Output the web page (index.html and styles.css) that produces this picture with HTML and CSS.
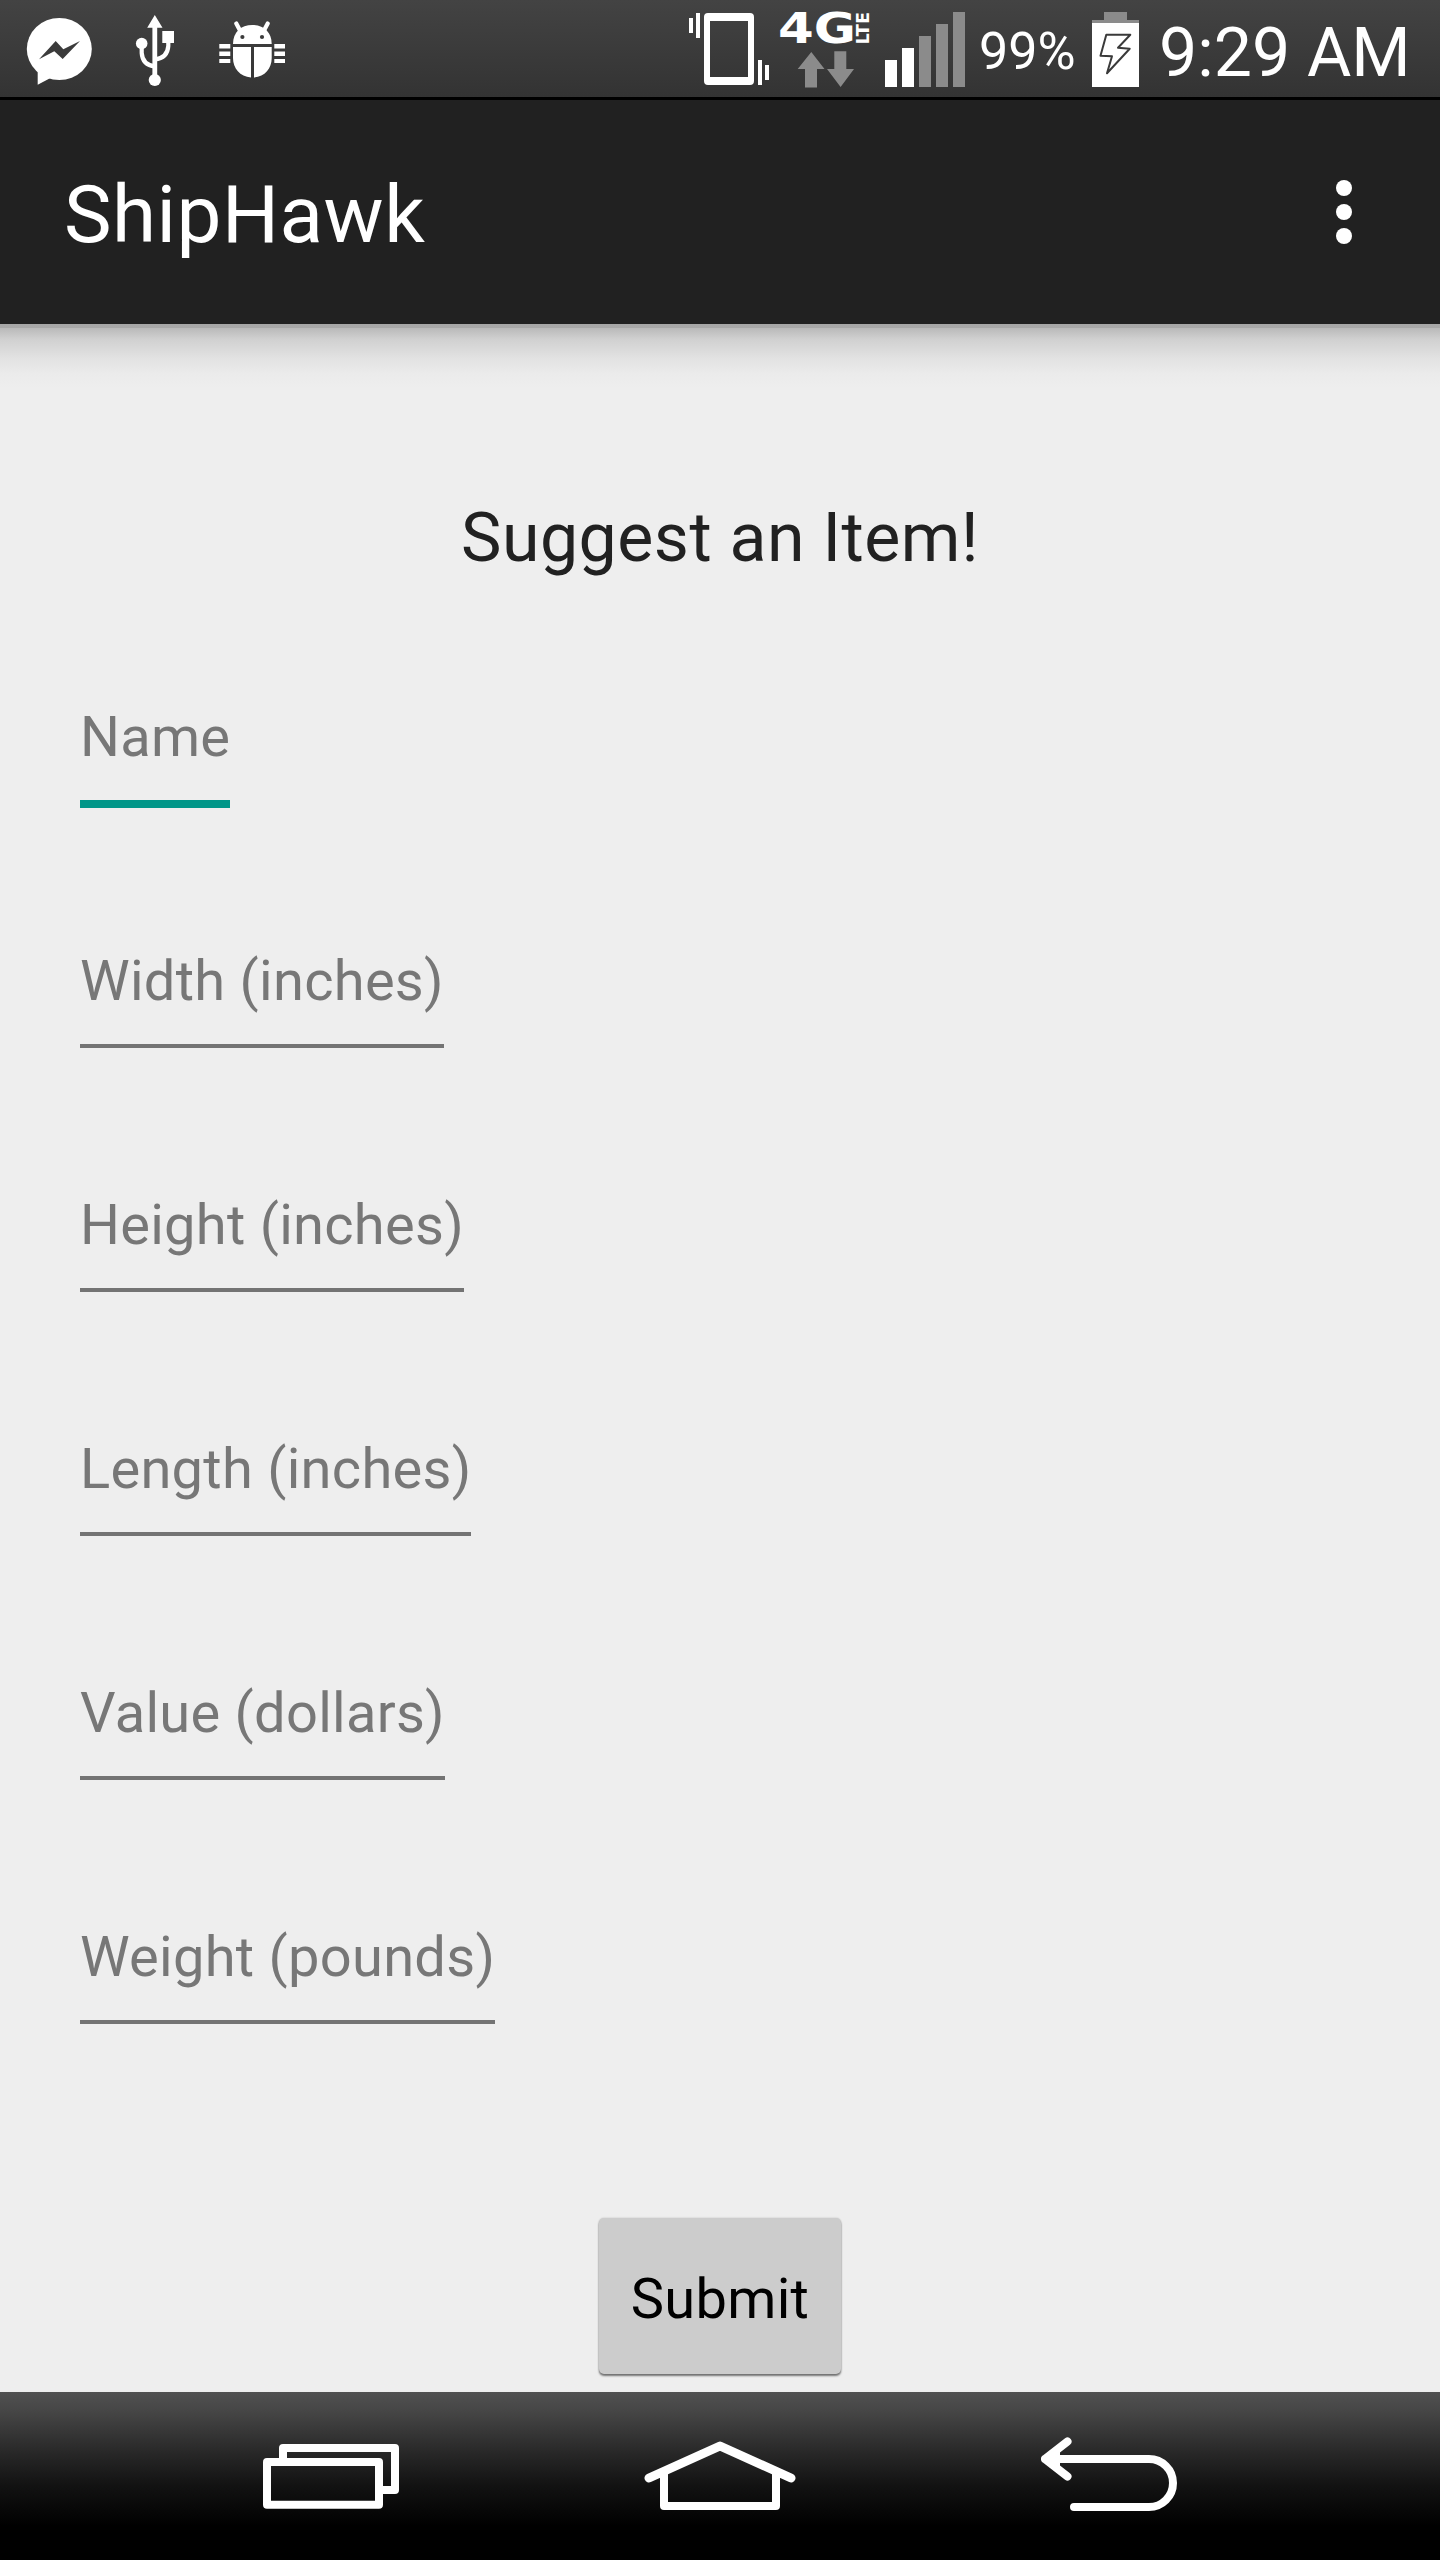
FILE: index.html
```html
<!DOCTYPE html>
<html lang="en">
<head>
<meta charset="utf-8">
<title>ShipHawk</title>
<link rel="stylesheet" href="styles.css">
</head>
<body>
<div class="screen">
  <div class="status-bar">
    <div class="status-group notifications">
      <svg class="icon" width="68" height="97" viewBox="26 0 68 97">
        <ellipse cx="59.3" cy="49" rx="32.5" ry="31"/>
        <path d="M37.7 69V84.7L50 78.2z"/>
        <path class="cut" d="M39 59.3L55.7 41L63.3 49.3L80 41L62.7 59L54.3 51.3z"/>
      </svg>
      <svg class="icon" width="42" height="97" viewBox="135 0 42 97">
        <path d="M154.8 15L162.5 27.7H147.2zM162.3 31H174V43H162.3z"/>
        <circle cx="154.8" cy="80" r="6.1"/>
        <circle cx="141.7" cy="43.5" r="5.8"/>
        <path class="line" stroke-width="4.8" d="M154.8 26V80"/>
        <path class="line" stroke-width="4.2" d="M141.7 46V53Q142.5 65 154.8 66.3M168.3 42V46Q167.5 58 154.8 59.5"/>
      </svg>
      <svg class="icon" width="69" height="97" viewBox="218 0 69 97">
        <path d="M233 44C233 32 241 25 252.3 25S271.7 32 271.7 44z"/>
        <path class="line round" stroke-width="4.2" d="M236.3 23.5L239.5 29.5M267.7 23.5L264.5 29.5"/>
        <circle class="cut" cx="242.4" cy="37" r="2.1"/>
        <circle class="cut" cx="262" cy="37" r="2.1"/>
        <path d="M233 47H251V77.6C240 76.5 233 68.5 233 58zM254 47H271.7V58C271.7 68.5 265 76.5 254 77.6z"/>
        <path d="M219.3 44H230.3V48.5H219.3zM219.3 51.6H230.3V56H219.3zM219.3 59H230.3V63H219.3zM274.3 44H285V48.5H274.3zM274.3 51.6H285V56H274.3zM274.3 59H285V63H274.3z"/>
      </svg>
    </div>
    <div class="status-group system">
      <svg class="icon" width="82" height="97" viewBox="688 0 82 97">
        <path fill-rule="evenodd" d="M708 13H750Q754 13 754 17V81Q754 85 750 85H708Q704 85 704 81V17Q704 13 708 13zM710 21V77H748V21z"/>
        <path d="M689 18H693V33H689zM696 13H700V38H696zM758 60H762V85H758zM765 65H769V80H765z"/>
      </svg>
      <svg class="icon network" width="98" height="97" viewBox="776 0 98 97">
        <text class="net-main" x="778" y="43.2" textLength="78" lengthAdjust="spacingAndGlyphs">4G</text>
        <text class="net-sub" transform="translate(869 44.5) rotate(-90)" textLength="32.5" lengthAdjust="spacingAndGlyphs">LTE</text>
        <path class="dim" d="M811.3 52L824.5 69H817V87.5H805V69H797.7zM834.3 51.3H846.3V69H854L840.6 87L827 69H834.3z"/>
      </svg>
      <svg class="icon signal" width="80" height="97" viewBox="885 0 80 97">
        <path d="M885 60H897V87H885zM902 48H914V87H902z"/>
        <path class="dim" d="M919 36H931V87H919zM936 24H948V87H936zM953 12H965V87H953z"/>
      </svg>
      <span class="battery-level">99%</span>
      <svg class="icon" width="47" height="97" viewBox="1092 0 47 97">
        <path class="dim" d="M1104 12H1127V20H1139V23H1092V20H1104z"/>
        <path d="M1092 23H1139V87H1092z"/>
        <path class="bolt" d="M1106.3 34.7H1130.3L1118 47.7L1129.7 48.7L1107 73.3L1112 56.3L1100.5 55.7z"/>
      </svg>
      <span class="clock">9:29 AM</span>
    </div>
  </div>

  <header class="app-bar">
    <h1 class="app-title">ShipHawk</h1>
    <div class="overflow-menu"><i></i><i></i><i></i></div>
  </header>

  <main class="content">
    <h2 class="form-title">Suggest an Item!</h2>
    <div class="form">
      <div class="row"><span class="field focused">Name</span></div>
      <div class="row"><span class="field">Width (inches)</span></div>
      <div class="row"><span class="field">Height (inches)</span></div>
      <div class="row"><span class="field">Length (inches)</span></div>
      <div class="row"><span class="field">Value (dollars)</span></div>
      <div class="row"><span class="field">Weight (pounds)</span></div>
    </div>
    <button class="submit" type="button">Submit</button>
  </main>

  <nav class="nav-bar">
    <svg class="nav-icon" width="136" height="168" viewBox="263 2392 136 168">
      <path class="line" stroke-width="8" stroke-linejoin="round" d="M283 2462V2448H395V2490H379M267 2462H379V2504.7H267z"/>
    </svg>
    <svg class="nav-icon" width="152" height="168" viewBox="644 2392 152 168">
      <path class="line round" stroke-width="9" d="M649 2478L720 2446L791 2478"/>
      <path class="line" stroke-width="8" stroke-linejoin="round" d="M664 2472V2506H776V2472"/>
    </svg>
    <svg class="nav-icon" width="136" height="168" viewBox="1041 2392 136 168">
      <path class="line round" stroke-width="8" d="M1067.5 2441.5L1045 2459L1067.5 2476.5M1045 2459H1149A24 24 0 0 1 1149 2507H1074"/>
      <path d="M1045 2459L1060 2448V2470z"/>
    </svg>
  </nav>
</div>
</body>
</html>
```
FILE: styles.css
```css
body {
  margin: 0;
  font-family: Roboto, sans-serif;
}

.screen {
  display: flex;
  flex-direction: column;
  width: 1440px;
  height: 2560px;
  background: #eee;
  overflow: hidden;
}

.status-bar {
  display: flex;
  justify-content: space-between;
  box-sizing: border-box;
  height: 100px;
  padding: 0 29px 0 26px;
  border-bottom: 3px solid #000;
  background: linear-gradient(#434343, #333);
  color: #fff;
}

.status-group {
  display: flex;
}

.icon,
.nav-icon {
  display: block;
  flex: none;
  fill: #fff;
}

.notifications {
  gap: 41px;
}

.cut {
  fill: #3b3b3b;
}

.dim {
  fill: #8b8b8b;
}

.line {
  fill: none;
  stroke: #fff;
}

.round {
  stroke-linecap: round;
  stroke-linejoin: round;
}

.bolt {
  fill: none;
  stroke: #3a3a3a;
  stroke-width: 2;
  stroke-linejoin: round;
}

.network {
  margin-left: 6px;
}

.net-main {
  font: bold 42px "DejaVu Sans", sans-serif;
}

.net-sub {
  font: bold 17px "DejaVu Sans", sans-serif;
}

.signal {
  margin-left: 11px;
}

.battery-level {
  width: 113px;
  margin-left: 14px;
  font-size: 52px;
  line-height: 104px;
  white-space: nowrap;
}

.clock {
  width: 252px;
  margin-left: 20px;
  font-size: 68px;
  line-height: 106px;
  white-space: nowrap;
}

.app-bar {
  display: flex;
  align-items: center;
  justify-content: space-between;
  height: 224px;
  padding: 0 88px 0 64px;
  background: #212121;
}

.app-title {
  margin: 6px 0 0;
  color: #fff;
  font-size: 80px;
  font-weight: 400;
  letter-spacing: 0.5px;
  line-height: 94px;
}

.overflow-menu {
  display: flex;
  flex-direction: column;
  gap: 8px;
}

.overflow-menu i {
  width: 16px;
  height: 16px;
  border-radius: 50%;
  background: #fff;
}

.content {
  display: flex;
  flex: 1;
  flex-direction: column;
  align-items: center;
  padding: 172px 80px 0;
  background: linear-gradient(#a6a6a6 0, #a8a8a8 4px, #b9b9b9 4px, #d0d0d0 15px, #e2e2e2 34px, #ebebeb 50px, #eee 64px);
}

.form-title {
  margin: 0 0 125px;
  color: #212121;
  font-size: 68px;
  font-weight: 400;
  letter-spacing: 0.5px;
  line-height: 84px;
}

.form {
  display: grid;
  grid-auto-rows: 244px;
  align-self: stretch;
}

.row {
  display: flex;
  align-items: flex-start;
}

.field {
  padding-bottom: 31px;
  border-bottom: 4px solid #737373;
  color: #777;
  font-size: 56px;
  letter-spacing: 0.28px;
  line-height: 64px;
}

.focused {
  border-bottom: 8px solid #009688;
}

.submit {
  width: 242px;
  height: 156px;
  margin-top: 49px;
  padding: 6px 0 0;
  border: 0;
  border-radius: 5px;
  background: #ccc;
  box-shadow: 0 2px 2px rgba(0, 0, 0, 0.5), 0 0 2px rgba(0, 0, 0, 0.2);
  color: #000;
  font: 56px/64px Roboto, sans-serif;
  letter-spacing: 0.3px;
}

.nav-bar {
  display: flex;
  justify-content: space-between;
  height: 168px;
  padding: 0 263px;
  background: linear-gradient(#515151 0, #444 22px, #2b2b2b 56px, #121212 94px, #000 134px);
}
```
